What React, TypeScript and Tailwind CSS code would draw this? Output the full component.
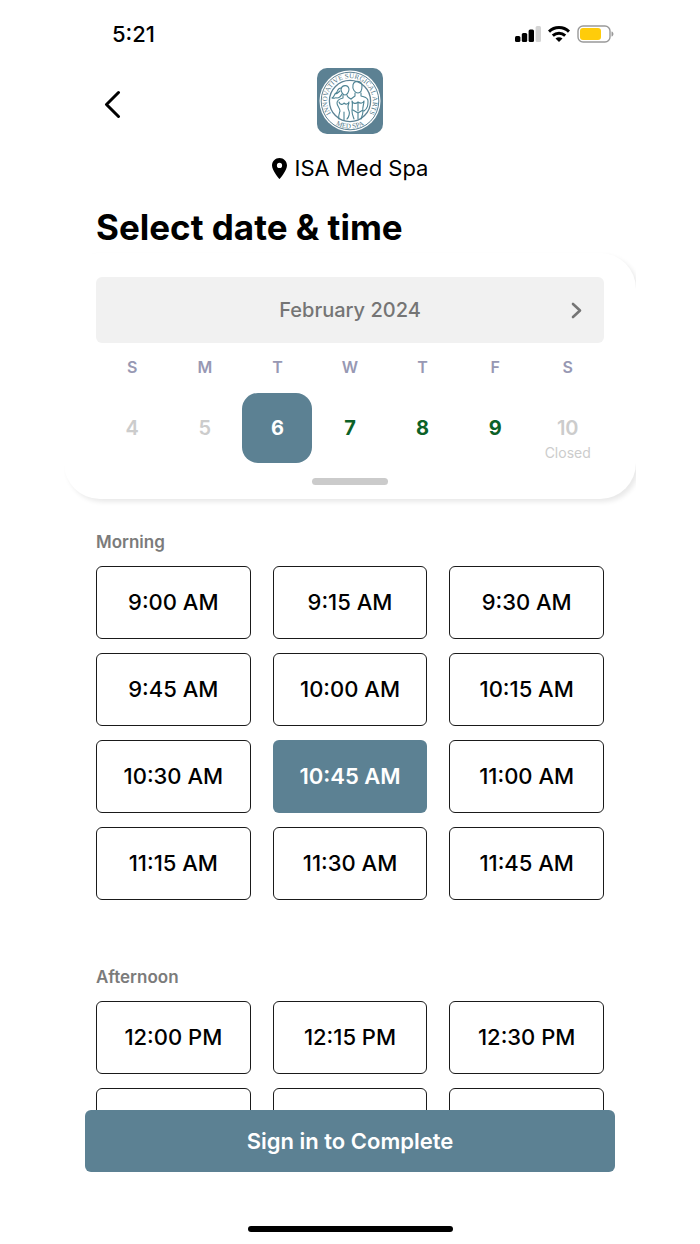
import React, { useState } from "react";

const weekDays = ["S", "M", "T", "W", "T", "F", "S"];

const dates = [
  { day: 4, available: false },
  { day: 5, available: false },
  { day: 6, available: true },
  { day: 7, available: true },
  { day: 8, available: true },
  { day: 9, available: true },
  { day: 10, available: false, note: "Closed" },
];

const morning = [
  "9:00 AM",
  "9:15 AM",
  "9:30 AM",
  "9:45 AM",
  "10:00 AM",
  "10:15 AM",
  "10:30 AM",
  "10:45 AM",
  "11:00 AM",
  "11:15 AM",
  "11:30 AM",
  "11:45 AM",
];

const afternoon = [
  "12:00 PM",
  "12:15 PM",
  "12:30 PM",
  "12:45 PM",
  "1:00 PM",
  "1:15 PM",
];

const StatusBar = () => (
  <div className="flex items-center justify-between h-[68px] pl-12 pr-[22px]">
    <span className="text-[22px] leading-7 font-medium">5:21</span>
    <div className="flex items-center gap-[7px]">
      {/* Signal */}
      <svg width="26" height="16" viewBox="0 0 26 16" aria-hidden="true">
        <rect x="0" y="10" width="5.4" height="6" rx="1.5" />
        <rect x="6.8" y="7" width="5.4" height="9" rx="1.5" />
        <rect x="13.6" y="3.5" width="5.4" height="12.5" rx="1.5" />
        <rect x="20.6" y="0" width="5.4" height="16" rx="1.5" fill="#d4d4d4" />
      </svg>
      {/* Wifi */}
      <svg width="22" height="16" viewBox="0 0 22 16" aria-hidden="true">
        <g fill="none" stroke="#000" strokeWidth="3">
          <path d="M1 5.6C6.6.2 15.4.2 21 5.6" />
          <path d="M4.8 9.6c3.6-3.3 8.8-3.3 12.4 0" />
        </g>
        <path d="M11 16l-3.5-3.5c2-1.8 5-1.8 7 0z" />
      </svg>
      {/* Battery */}
      <svg width="37" height="18" viewBox="0 0 37 18" aria-hidden="true">
        <rect x="1" y="1" width="32" height="16" rx="5" fill="none" stroke="#999" strokeWidth="1.4" />
        <rect x="3" y="3" width="21" height="12" rx="3" fill="#ffcc0a" />
        <path d="M34.5 6.5c2.6.6 2.6 4.4 0 5z" fill="#999" />
      </svg>
    </div>
  </div>
);

const Logo = () => (
  <svg width="66" height="66" viewBox="0 0 66 66" role="img" aria-label="Innovative Surgical Arts Med Spa">
    <defs>
      <path id="ring-top" d="M17.6 49.8A22.8 22.8 0 1 1 48.4 49.8" />
      <path id="ring-bottom" d="M13.5 52.5A27.8 27.8 0 0 0 52.5 52.5" />
    </defs>
    <rect width="66" height="66" rx="10" fill="#5c8193" />
    <circle cx="33" cy="33" r="30.5" fill="#fff" />
    <circle cx="33" cy="33" r="28.8" fill="none" stroke="#5c8193" strokeWidth="1" />
    <circle cx="33" cy="33" r="20.6" fill="none" stroke="#5c8193" strokeWidth="1.3" />
    <g fill="#4f7688" fontFamily="'Liberation Serif', serif" fontSize="7">
      <text textAnchor="middle">
        <textPath href="#ring-top" startOffset="50%">INNOVATIVE SURGICAL ARTS</textPath>
      </text>
      <text textAnchor="middle">
        <textPath href="#ring-bottom" startOffset="50%">MED SPA</textPath>
      </text>
    </g>
    <g fill="none" stroke="#4e8494" strokeWidth="1.1" strokeLinecap="round" strokeLinejoin="round">
      {/* woman */}
      <path d="M24 21c1-4 7-5 8 0 0 3-2 6-4 6s-4-3-4-6z" />
      <path d="M24 20c-4 0-3 4-5 5s-1 3-4 5c3 1 3-1 5 0 3 0 4-2 5-4M18 26c2 0 4-2 5-3" />
      <path d="M26 27v3c-4 1-6 2-6 5 0 3 3 5 3 8-1 3-2 5-1 8M30 27c0 2 2 3 4 4M22 34c1 3 4 3 5 1 2 2 4 1 5-1M32 35c-2 4-1 6 0 8s0 6-2 8M27 44v8" />
      {/* man */}
      <path d="M36 17c1-5 9-5 9 1 0 4-1 7-4 7s-6-4-5-8z" />
      <path d="M38 25v3l-4 3M44 25v3c3 1 7 1 7 5s0 7-4 10M35 33c1 3 4 3 6 1 3 2 5 1 6-1M47 33c0 4-2 6-1 10 0 3-1 5-2 8M35 33c1 4 0 7 0 10s1 5 2 8M41 35v8M41 45v6M36 42l5 3 5-3" />
    </g>
  </svg>
);

type SlotsProps = {
  title: string;
  times: string[];
  selected: string;
  onSelect: (time: string) => void;
};

const Slots = ({ title, times, selected, onSelect }: SlotsProps) => (
  <section className="px-8">
    <h2 className="mb-3 text-[17px] leading-6 font-semibold text-[#7b7b7b]">
      {title}
    </h2>
    <div className="grid grid-cols-3 gap-x-[22px] gap-y-[14px]">
      {times.map((time) => (
        <button
          key={time}
          type="button"
          onClick={() => onSelect(time)}
          className={`h-[73px] rounded-md text-[22px] ${
            time === selected
              ? "bg-[#5c8193] font-semibold text-white"
              : "border border-[#1a1a1a] bg-white font-medium text-black"
          }`}
        >
          {time}
        </button>
      ))}
    </div>
  </section>
);

const App = () => {
  const [date, setDate] = useState(6);
  const [time, setTime] = useState("10:45 AM");

  return (
    <div className="flex flex-col h-screen px-16 bg-white text-black font-['Inter','Liberation_Sans',sans-serif]">
      <main className="flex-1 min-h-0 overflow-x-hidden overflow-y-auto [scrollbar-width:none]">
        <StatusBar />

        {/* Header */}
        <header className="px-8">
          <div className="grid items-end grid-cols-3">
            <button type="button" aria-label="Back" className="p-2 mb-2 justify-self-start">
              <svg width="17" height="28" viewBox="0 0 17 28" fill="none" stroke="#000" strokeWidth="3" strokeLinecap="round" strokeLinejoin="round">
                <path d="M14.5 2.5L2.5 14.5l12 12" />
              </svg>
            </button>
            <div className="justify-self-center">
              <Logo />
            </div>
          </div>
          <div className="flex items-center justify-center gap-2 mt-[18px]">
            <svg width="15" height="21" viewBox="0 0 15 21" aria-hidden="true">
              <path
                fillRule="evenodd"
                d="M7.5 0C3.3 0 0 3.3 0 7.4 0 12.5 7.5 21 7.5 21S15 12.5 15 7.4C15 3.3 11.7 0 7.5 0zm0 4.8a2.6 2.6 0 1 1 0 5.2 2.6 2.6 0 0 1 0-5.2z"
              />
            </svg>
            <span className="text-[22px] leading-8">ISA Med Spa</span>
          </div>
          <h1 className="mt-[21px] mb-1 text-[35px] leading-[44px] font-bold">
            Select date &amp; time
          </h1>
        </header>

        {/* Calendar */}
        <section className="px-8 pt-6 pb-[14px] rounded-[36px] shadow-[3px_3px_5px_rgba(0,0,0,0.09)]">
          <div className="relative flex items-center justify-center h-[66px] rounded-md bg-[#f1f1f1] text-[#757575]">
            <span className="text-xl font-medium">February 2024</span>
            <button type="button" aria-label="Next week" className="absolute p-2 right-[14px]">
              <svg width="11" height="17" viewBox="0 0 11 17" fill="none" stroke="currentColor" strokeWidth="2.6" strokeLinecap="round" strokeLinejoin="round">
                <path d="M2 2l7 6.5L2 15" />
              </svg>
            </button>
          </div>
          <div className="grid grid-cols-7 mt-3 text-center">
            {weekDays.map((name, index) => (
              <span key={index} className="text-base font-semibold text-[#9798b3]">
                {name}
              </span>
            ))}
          </div>
          <div className="grid grid-cols-7 mt-[14px]">
            {dates.map(({ day, available, note }) => (
              <button
                key={day}
                type="button"
                disabled={!available}
                onClick={() => setDate(day)}
                className={`relative w-[70px] h-[70px] rounded-2xl justify-self-center text-xl ${
                  day === date
                    ? "bg-[#5c8193] font-bold text-white"
                    : available
                      ? "font-bold text-[#0c6127]"
                      : "font-semibold text-[#cccccc]"
                }`}
              >
                {day}
                {note && (
                  <span className="absolute inset-x-0 bottom-0 text-sm font-normal">
                    {note}
                  </span>
                )}
              </button>
            ))}
          </div>
          <div className="w-[76px] h-[7px] mx-auto mt-[15px] rounded-full bg-[#cbcbcb]"></div>
        </section>

        {/* Time slots */}
        <div className="flex flex-col gap-[65px] pt-[31px] pb-8">
          <Slots title="Morning" times={morning} selected={time} onSelect={setTime} />
          <Slots title="Afternoon" times={afternoon} selected={time} onSelect={setTime} />
        </div>
      </main>

      {/* Sign in */}
      <footer className="px-[21px] pb-3">
        <button
          type="button"
          className="w-full h-[62px] rounded-md bg-[#5c8193] text-[22px] font-semibold text-white"
        >
          Sign in to Complete
        </button>
        <div className="w-[205px] h-[6px] mx-auto mt-[54px] rounded-full bg-black"></div>
      </footer>
    </div>
  );
};

export default App;
